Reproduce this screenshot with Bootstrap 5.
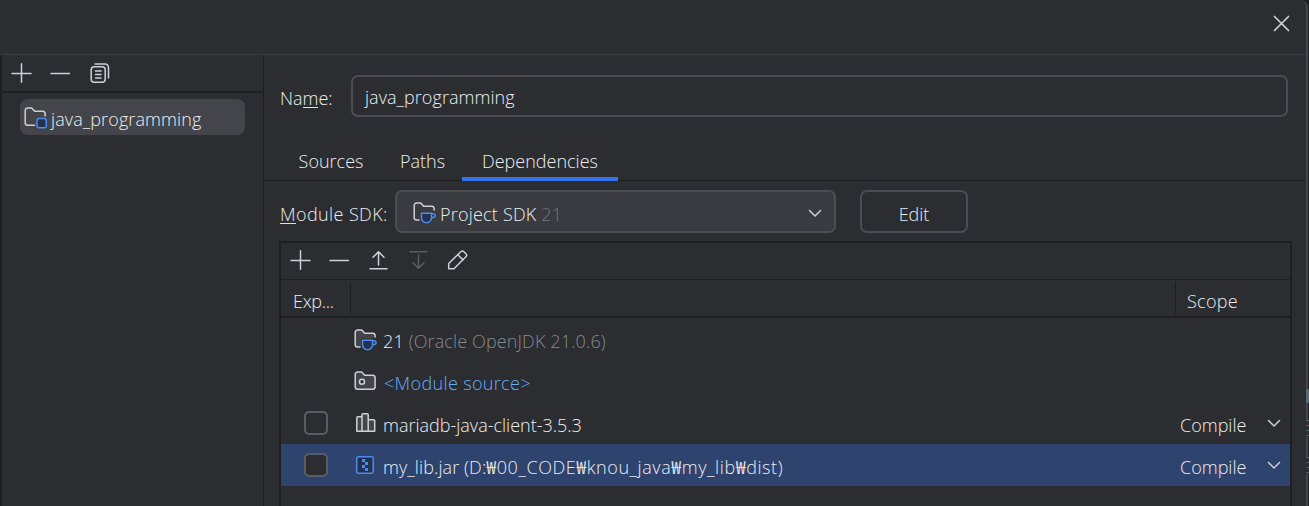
<!DOCTYPE html>
<html lang="en" data-bs-theme="dark">
<head>
<meta charset="utf-8">
<title>Project Structure</title>
<link href="https://cdn.jsdelivr.net/npm/bootstrap@5.3.0/dist/css/bootstrap.min.css" rel="stylesheet">
<script src="https://cdn.jsdelivr.net/npm/bootstrap@5.3.0/dist/js/bootstrap.bundle.min.js" defer></script>
<style>
body{margin:0;background:#2b2d30;color:#eceef2;font:350 18px/24px "Open Sans","Noto Sans CJK KR",sans-serif;height:506px;overflow:hidden}
.window{height:506px;background:#1e1f22;padding-right:1px}
.inner{background:#2b2d30;border-right:2px solid #43454a;border-top-right-radius:8px}
.titlebar{height:55px;border-bottom:1px solid #393b40;padding:11px 12px 0 0}
.side{width:264px;border-left:2px solid #1e1f22;border-right:1px solid #1e1f22}
.side-tools{height:38px;border-bottom:2px solid #1e1f22;padding-left:7px}
.tools{gap:15px}
.node{margin:6px 18px 0;height:36px;border-radius:8px;background:#43454a;padding-left:3px}
.name-row{padding:20px 18px 0 16px}
.name-row label{width:71px}
.field{height:42px;border:2px solid #4a4d53;border-radius:7px;padding:2px 0 0 12px}
.tabs{height:61px;margin-top:3px;padding-left:15px;border-bottom:1px solid #1e1f22}
.tab-item{height:41px;line-height:42px;margin-bottom:-1px;text-align:center}
.tab-item.on{border-bottom:4px solid #3574f0}
.sdk-row{padding:9px 0 0 16px}
.sdk-row label{width:115px}
.combo{width:441px;height:43px;border:2px solid #4a4d53;border-radius:7px;background:#393b40;padding:0 12px 0 15px}
.edit{width:108px;height:43px;border:2px solid #4a4d53;border-radius:7px;margin-left:24px}
.deps{margin:8px 14px 0 15px;border:2px solid #1e1f22;border-bottom:0}
.deps-tools{height:37px;border-bottom:1px solid #1e1f22;padding:0 0 2px 7px;gap:15.2px}
.deps-head{height:38px;border-bottom:2px solid #1e1f22}
.deps-head>div{margin:2px 0;padding-top:5px}
.c1{width:69px}
.c3{width:115px}
.vsep{border-left:1px solid #1e1f22}
.line{height:42px}
.line.sel{background:#2e436e}
.line .c3{padding:0 9px 0 5px}
.line>svg{margin-left:3px}
.check{width:24px;height:24px;border:2px solid #5a5d63;border-radius:5px;background:#2b2d30;margin-left:23px}
.dim{color:#85888f}
.combo .dim{color:#6b7a80}
.lnk{color:#68acff}
.drop{position:relative;top:2px}
svg{display:block;flex:none;fill:none;stroke:#ced0d6;stroke-linecap:round;stroke-linejoin:round}
.off{stroke:#5a5d63}
.fill-soft{fill:#43454a}
.blue{stroke:#4c8cee;fill:#25324d}
.under{box-shadow:inset 0 -1px #dfe1e5;display:inline-block;line-height:20px}
span,label{white-space:nowrap}
.edge{right:0;top:389px;width:3px}
.edge i{display:block;background:#566b6d;height:14px;margin-bottom:17px}
.edge .bits{height:17px;background:repeating-linear-gradient(#4b6667 0 1px,#2b2d30 1px 5px);margin-bottom:20px}
</style>
</head>
<body>
<svg width="0" height="0" class="position-absolute">
  <symbol id="plus" viewBox="0 0 24 24"><path d="M12.500 2.700v18.600M3 12.500h19" stroke-width="1.500"/></symbol>
  <symbol id="minus" viewBox="0 0 24 24"><path d="M3 12.500h18.500" stroke-width="1.500"/></symbol>
  <symbol id="copy" viewBox="0 0 24 24"><rect x="4.200" y="5.700" width="14" height="15.500" rx="3" stroke-width="1.500"/><path d="M8 3h10a3.500 3.500 0 0 1 3.500 3.500v10.500M8.500 10h5.500M8.500 13.500h5.500M8.500 17h5.500" stroke-width="1.500"/></symbol>
  <symbol id="up" viewBox="0 0 24 24"><path d="M12.500 17V4M7 9.300l5.500-5.600 5.500 5.600M4 20.700h17" stroke-width="1.500"/></symbol>
  <symbol id="down" viewBox="0 0 24 24"><path d="M12.500 7v13M7 14.700l5.500 5.600 5.500-5.600M4 3.700h17" stroke-width="1.500"/></symbol>
  <symbol id="pencil" viewBox="0 0 24 24"><path d="M3.700 20.800v-5.300L15.800 3.700a2.200 2.200 0 0 1 3.100 0l2 2a2.200 2.200 0 0 1 0 3.100L9 20.800zM12.800 6.700l5.200 5.200" stroke-width="1.500"/></symbol>
  <symbol id="chev" viewBox="0 0 14 9"><path d="M1.500 1.500 7 7l5.500-5.500" stroke-width="1.500"/></symbol>
  <symbol id="cup" viewBox="0 0 24 24"><path class="fill-soft" d="M7 20H4.500a2.300 2.300 0 0 1-2.300-2.300V5.300A2.300 2.300 0 0 1 4.500 3h4.200l3 3.200h8.100a2.300 2.300 0 0 1 2.300 2.300V10" stroke-width="1.500"/><path stroke="none" fill="#2b2d30" d="M8 11.500h15v12H8z"/><path class="blue" d="M9.500 13.200h10v4.500a5 5 0 0 1-10 0zM19.500 13.700h1.700a1.900 1.900 0 0 1 0 3.800h-1.700" stroke-width="1.500"/></symbol>
  <symbol id="cup2" viewBox="0 0 24 24"><path d="M7 20H4.500a2.300 2.300 0 0 1-2.300-2.300V5.300A2.300 2.300 0 0 1 4.500 3h4.200l3 3.200h8.100a2.300 2.300 0 0 1 2.300 2.300V10" stroke-width="1.500"/><path class="blue" d="M9.500 13.200h10v4.500a5 5 0 0 1-10 0zM19.500 13.700h1.700a1.900 1.900 0 0 1 0 3.800h-1.700" stroke-width="1.500"/></symbol>
  <symbol id="module" viewBox="0 0 24 24"><path d="M11.500 20.200h-7A2.300 2.300 0 0 1 2.200 18V5.300A2.300 2.300 0 0 1 4.500 3h4.200l3 3.200h8.100a2.300 2.300 0 0 1 2.300 2.300V11" stroke-width="1.500"/><rect class="blue" x="14" y="13.500" width="9.300" height="9.300" rx="2.300" stroke-width="1.500"/></symbol>
  <symbol id="source" viewBox="0 0 24 24"><path class="fill-soft" d="M4.500 20.200A2.300 2.300 0 0 1 2.200 18V5.300A2.300 2.300 0 0 1 4.500 3h4.200l3 3.200h8.100a2.300 2.300 0 0 1 2.300 2.300V18a2.300 2.300 0 0 1-2.300 2.200z" stroke-width="1.500"/><circle cx="9" cy="12.700" r="2.500" fill="#2b2d30" stroke-width="1.500"/></symbol>
  <symbol id="lib" viewBox="0 0 24 24"><path class="fill-soft" d="M9 20.200H3.800V6.700a1 1 0 0 1 1-1H9zM9 20.200V3.700a1 1 0 0 1 1-1h4.200a1 1 0 0 1 1 1v16.500zM15.200 8.800h5.500a1 1 0 0 1 1 1v10.400h-6.500z" stroke-width="1.500"/></symbol>
  <symbol id="jar" viewBox="0 0 24 24"><rect class="blue" x="3.700" y="3.700" width="16.500" height="16.500" rx="2" stroke-width="1.500"/><path stroke="none" fill="#4c8cee" d="M9 6h3v3H9zM12 9h3v3h-3zM9 12h3v3H9zM12 15h3v3h-3z"/></symbol>
</svg>

<div class="window position-relative">
  <div class="inner d-flex flex-column h-100">
    <header class="titlebar d-flex justify-content-end flex-shrink-0">
      <svg width="25" height="25" viewBox="0 0 25 25"><path d="M5.500 5.500l14 14M19.500 5.500l-14 14" stroke-width="1.700"/></svg>
    </header>
    <div class="d-flex flex-grow-1">
      <aside class="side flex-shrink-0">
        <div class="side-tools tools d-flex align-items-center">
          <svg width="24" height="24"><use href="#plus"/></svg>
          <svg width="24" height="24"><use href="#minus"/></svg>
          <svg width="24" height="24"><use href="#copy"/></svg>
        </div>
        <div class="node d-flex align-items-center">
          <svg width="24" height="24"><use href="#module"/></svg>
          <span class="drop" style="letter-spacing:.1px;margin-left:4px">java_programming</span>
        </div>
      </aside>
      <main class="flex-grow-1">
        <div class="name-row d-flex align-items-center">
          <label><span class="drop">Na<span class="under">m</span>e:</span></label>
          <div class="field flex-grow-1 d-flex align-items-center"><span style="letter-spacing:.05px">java_programming</span></div>
        </div>
        <nav class="tabs d-flex align-items-end">
          <div class="tab-item" style="width:104px">Sources</div>
          <div class="tab-item" style="width:79px">Paths</div>
          <div class="tab-item on" style="width:156px">Dependencies</div>
        </nav>
        <div class="sdk-row d-flex align-items-center">
          <label><span class="drop" style="letter-spacing:.4px"><span class="under">M</span>odule SDK:</span></label>
          <div class="combo d-flex align-items-center">
            <svg width="24" height="24"><use href="#cup2"/></svg>
            <span class="drop flex-grow-1" style="letter-spacing:.2px;margin-left:4px">Project SDK <span class="dim">21</span></span>
            <svg width="14" height="9" class="mt-1"><use href="#chev"/></svg>
          </div>
          <div class="edit d-flex align-items-center justify-content-center"><span class="drop">Edit</span></div>
        </div>
        <section class="deps">
          <div class="deps-tools tools d-flex align-items-center">
            <svg width="24" height="24"><use href="#plus"/></svg>
            <svg width="24" height="24"><use href="#minus"/></svg>
            <svg width="24" height="24"><use href="#up"/></svg>
            <svg width="24" height="24" class="off"><use href="#down"/></svg>
            <svg width="24" height="24"><use href="#pencil"/></svg>
          </div>
          <div class="deps-head d-flex">
            <div class="c1 d-flex align-items-center"><span style="margin-left:12px;letter-spacing:-.3px">Exp...</span></div>
            <div class="vsep flex-grow-1"></div>
            <div class="c3 vsep d-flex align-items-center"><span style="margin-left:11px;letter-spacing:.3px">Scope</span></div>
          </div>
          <div class="line d-flex align-items-center">
            <div class="c1"></div>
            <svg width="24" height="24"><use href="#cup"/></svg>
            <span class="drop" style="letter-spacing:.13px;margin-left:6px">21 <span class="dim">(Oracle OpenJDK 21.0.6)</span></span>
          </div>
          <div class="line d-flex align-items-center">
            <div class="c1"></div>
            <svg width="24" height="24"><use href="#source"/></svg>
            <span class="drop lnk" style="letter-spacing:.35px;margin-left:7px">&lt;Module source&gt;</span>
          </div>
          <div class="line d-flex align-items-center">
            <div class="c1"><div class="check"></div></div>
            <svg width="24" height="24"><use href="#lib"/></svg>
            <span class="drop flex-grow-1" style="margin-left:6px">mariadb-java-client-3.5.3</span>
            <div class="c3 d-flex align-items-center justify-content-between"><span class="drop">Compile</span><svg width="14" height="9"><use href="#chev"/></svg></div>
          </div>
          <div class="line sel d-flex align-items-center">
            <div class="c1"><div class="check"></div></div>
            <svg width="24" height="24"><use href="#jar"/></svg>
            <span class="drop flex-grow-1" style="letter-spacing:.1px;margin-left:6px">my_lib.jar (D:<span style="letter-spacing:.58px">₩00_CODE₩knou_java₩my_lib₩dist)</span></span>
            <div class="c3 d-flex align-items-center justify-content-between"><span class="drop">Compile</span><svg width="14" height="9"><use href="#chev"/></svg></div>
          </div>
          <div class="line"></div>
        </section>
      </main>
    </div>
  </div>
  <div class="edge position-absolute"><i></i><i class="bits"></i><i class="bits"></i></div>
</div>
</body>
</html>
